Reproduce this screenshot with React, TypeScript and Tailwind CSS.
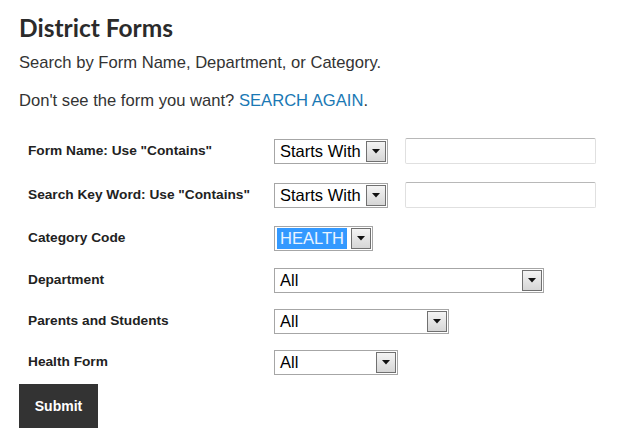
import React from "react";

function Arrow() {
  return (
    <div className="ml-auto mr-[1px] flex h-[21px] w-[20px] shrink-0 items-center justify-center border border-[#707070] bg-gradient-to-b from-[#f4f4f4] to-[#d6d6d6]">
      <svg width="8" height="5" viewBox="0 0 8 5">
        <path d="M0 0 L8 0 L4 4.5 Z" fill="#111" />
      </svg>
    </div>
  );
}

function FakeSelect({
  value,
  width,
  highlight,
}: {
  value: string;
  width: string;
  highlight?: boolean;
}) {
  return (
    <div
      className={`flex h-[25px] items-center border border-[#a6a6a6] bg-white text-[16.5px] ${width}`}
    >
      {highlight ? (
        <span className="ml-[2px] bg-[#3399ff] px-[3px] leading-[21px] text-[#eaf4ff]">
          {value}
        </span>
      ) : (
        <span className="pl-[5px] text-black">{value}</span>
      )}
      <Arrow />
    </div>
  );
}

function TextBox() {
  return (
    <div className="ml-[17px] h-[26px] w-[191px] rounded-[2px] border border-[#e0e0e0] border-t-[#b8b8b8] bg-white" />
  );
}

function Row({
  label,
  children,
  h,
}: {
  label: string;
  children: React.ReactNode;
  h: string;
}) {
  return (
    <div className={`flex items-center ${h}`}>
      <div className="w-[255px] pl-[9px] text-[13.7px] font-bold text-[#222]">
        {label}
      </div>
      <div className="flex items-center">{children}</div>
    </div>
  );
}

export default function App() {
  return (
    <div
      className="min-h-[443px] w-[619px] bg-white pl-[19px] pt-[12px] text-[#333]"
      style={{ fontFamily: '"Liberation Sans", Arial, sans-serif' }}
    >
      <h1
        className="text-[24.5px] font-bold leading-[32px] text-[#2b2b2b]"
        style={{ fontFamily: 'Lato, "Liberation Sans", sans-serif' }}
      >
        District Forms
      </h1>
      <p className="mt-[9px] text-[16.6px] leading-[20px] text-[#333]">
        Search by Form Name, Department, or Category.
      </p>
      <p className="mt-[18px] text-[16.6px] leading-[20px] text-[#333]">
        Don't see the form you want?{" "}
        <span className="text-[#1a78b4]">SEARCH AGAIN</span>.
      </p>
      <div className="mt-[18px] flex flex-col">
        <Row label={'Form Name: Use "Contains"'} h="h-[44px]">
          <FakeSelect value="Starts With" width="w-[114px]" />
          <TextBox />
        </Row>
        <Row label={'Search Key Word: Use "Contains"'} h="h-[44px]">
          <FakeSelect value="Starts With" width="w-[114px]" />
          <TextBox />
        </Row>
        <Row label="Category Code" h="h-[42px]">
          <FakeSelect value="HEALTH" width="w-[99px]" highlight />
        </Row>
        <Row label="Department" h="h-[42px]">
          <FakeSelect value="All" width="w-[270px]" />
        </Row>
        <Row label="Parents and Students" h="h-[40px]">
          <FakeSelect value="All" width="w-[175px]" />
        </Row>
        <Row label="Health Form" h="h-[43px]">
          <FakeSelect value="All" width="w-[124px]" />
        </Row>
      </div>
      <button className="h-[44px] w-[79px] bg-[#333333] text-[14px] font-bold text-white">
        Submit
      </button>
    </div>
  );
}
